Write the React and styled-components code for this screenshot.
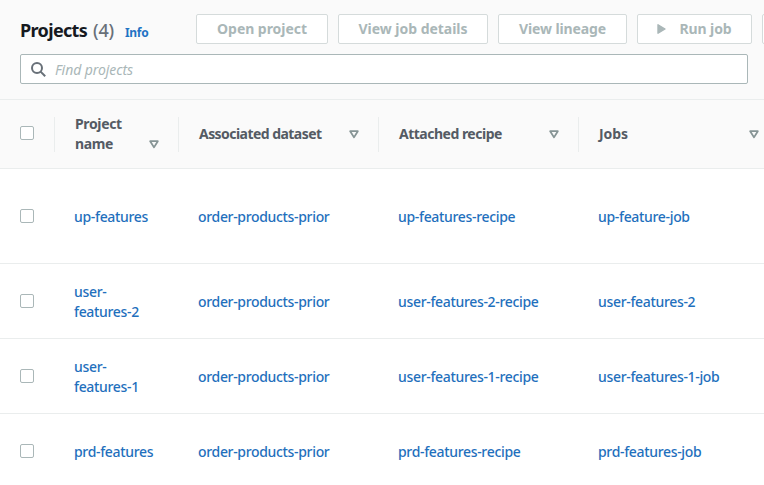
import React from "react";
import styled, { createGlobalStyle } from "styled-components";

const GlobalStyle = createGlobalStyle`
  *, *::before, *::after { box-sizing: border-box; }
  html, body { margin: 0; height: 485px; overflow: hidden; background: #fff; }
  body {
    font-family: "Noto Sans", "Open Sans", sans-serif;
    font-size: 14px;
    line-height: 20px;
    color: #16191f;
  }
`;

const Panel = styled.main`
  width: 764px;
  height: 485px;
  overflow: hidden;
  background: #fff;
`;

const Header = styled.header`
  height: 100px;
  padding: 14px 0 0 20px;
  background: #fafafa;
  border-bottom: 1px solid #eaeded;
`;

const Toolbar = styled.div`
  display: flex;
  height: 30px;
`;

const Heading = styled.div`
  flex: 0 0 176px;
  display: flex;
  align-items: baseline;
  white-space: nowrap;
`;

const Title = styled.h1`
  flex: 0 0 73px;
  margin: 0;
  font-size: 18px;
  line-height: 32px;
  font-weight: 700;
  letter-spacing: -0.65px;
`;

const Count = styled.span`
  flex: 0 0 32px;
  font-size: 18px;
  letter-spacing: -0.2px;
  font-weight: 500;
  color: #687078;
`;

const InfoLink = styled.a`
  font-size: 12px;
  font-weight: 700;
  letter-spacing: -0.3px;
  color: #1f73c4;
`;

const Actions = styled.div`
  display: flex;
  gap: 10px;
`;

const Button = styled.button`
  flex: 0 0 ${(p) => p.$width}px;
  height: 30px;
  display: flex;
  align-items: center;
  justify-content: center;
  gap: 13px;
  padding: 0;
  border: 1px solid #d5dbdb;
  border-radius: 2px;
  background: #fff;
  color: #aab7b8;
  font: 700 14px/20px "Noto Sans", sans-serif;
  letter-spacing: ${(p) => p.$spacing || 0}px;
  white-space: nowrap;
`;

const SearchBox = styled.label`
  display: flex;
  align-items: center;
  gap: 9px;
  width: 728px;
  height: 30px;
  margin-top: 10px;
  padding-left: 10px;
  border: 1px solid #aab7b8;
  border-radius: 2px;
  background: #fff;
`;

const SearchInput = styled.input`
  flex: 1;
  padding: 2px 0 0;
  border: 0;
  outline: 0;
  background: transparent;
  font: italic 14px/20px "Noto Sans", sans-serif;
  letter-spacing: -0.08px;
  &::placeholder { color: #aab7b8; opacity: 1; }
`;

const Row = styled.div`
  display: grid;
  grid-template-columns: 54px 124px 200px 200px 200px;
  align-items: center;
  width: 778px;
  height: ${(p) => p.$height}px;
  border-bottom: 1px solid #eaeded;
`;

const HeadRow = styled(Row)`
  background: #fafafa;
`;

const CheckCell = styled.div`
  padding: 0 0 ${(p) => (p.$head ? 2 : 0)}px 20px;
  display: flex;
`;

const Checkbox = styled.input.attrs({ type: "checkbox" })`
  appearance: none;
  width: 14px;
  height: 14px;
  margin: 0;
  border: 1px solid #aab7b8;
  border-radius: 2px;
  background: #fff;
`;

const HeadCell = styled.div`
  display: flex;
  align-items: ${(p) => (p.$wrap ? "flex-end" : "center")};
  justify-content: space-between;
  height: 35px;
  padding: 0 19px 0 20px;
  border-left: 1px solid #eaeded;
  color: #545b64;
  font-weight: 700;
  letter-spacing: ${(p) => p.$spacing}px;
`;

const HeadLabel = styled.span`
  width: ${(p) => (p.$wrap ? "60px" : "auto")};
  margin-bottom: ${(p) => (p.$wrap ? "-2px" : "0")};
  white-space: ${(p) => (p.$wrap ? "normal" : "nowrap")};
`;

const SortIcon = styled.svg`
  flex: none;
  width: 10px;
  height: 9px;
  margin-bottom: ${(p) => (p.$wrap ? "3px" : "0")};
`;

const Cell = styled.div`
  padding: 2px 20px 0 20px;
`;

const Link = styled.a`
  color: #1f70bd;
  font-weight: 500;
  letter-spacing: -0.33px;
`;

const columns = [
  { label: "Project name", wrap: true, spacing: -0.35 },
  { label: "Associated dataset", spacing: -0.55 },
  { label: "Attached recipe", spacing: -0.5 },
  { label: "Jobs", spacing: -0.1 },
];

const rows = [
  { height: 95, cells: ["up-features", "order-products-prior", "up-features-recipe", "up-feature-job"] },
  { height: 75, cells: ["user-features-2", "order-products-prior", "user-features-2-recipe", "user-features-2"] },
  { height: 75, cells: ["user-features-1", "order-products-prior", "user-features-1-recipe", "user-features-1-job"] },
  { height: 75, cells: ["prd-features", "order-products-prior", "prd-features-recipe", "prd-features-job"] },
];

export default function App() {
  return (
    <>
      <GlobalStyle />
      <Panel>
        <Header>
          <Toolbar>
            <Heading>
              <Title>Projects</Title>
              <Count>(4)</Count>
              <InfoLink>Info</InfoLink>
            </Heading>
            <Actions>
              <Button $width={132} $spacing={-0.05}>Open project</Button>
              <Button $width={150} $spacing={-0.03}>View job details</Button>
              <Button $width={129} $spacing={-0.1}>View lineage</Button>
              <Button $width={115} $spacing={-0.1}>
                <svg width="9" height="10" viewBox="0 0 9 10">
                  <path d="M1 .8 8 5 1 9.2Z" fill="#aab7b8" stroke="#aab7b8" strokeWidth="1.4" strokeLinejoin="round" />
                </svg>
                Run job
              </Button>
              <Button $width={132} />
            </Actions>
          </Toolbar>
          <SearchBox>
            <svg width="15" height="15" viewBox="0 0 15 15" fill="none" stroke="#687078" strokeWidth="2">
              <circle cx="6" cy="6" r="5" />
              <path d="m9.6 9.6 4.6 4.6" />
            </svg>
            <SearchInput placeholder="Find projects" />
          </SearchBox>
        </Header>
        <HeadRow $height={69}>
          <CheckCell $head><Checkbox /></CheckCell>
          {columns.map((c) => (
            <HeadCell key={c.label} $wrap={c.wrap} $spacing={c.spacing}>
              <HeadLabel $wrap={c.wrap}>{c.label}</HeadLabel>
              <SortIcon $wrap={c.wrap} viewBox="0 0 10 9">
                <path d="M1.2 1.2h7.6L5 7.4Z" fill="none" stroke="#879596" strokeWidth="1.8" strokeLinejoin="round" />
              </SortIcon>
            </HeadCell>
          ))}
        </HeadRow>
        {rows.map((r) => (
          <Row key={r.cells[0]} $height={r.height}>
            <CheckCell><Checkbox /></CheckCell>
            {r.cells.map((text, i) => (
              <Cell key={i}><Link>{text}</Link></Cell>
            ))}
          </Row>
        ))}
      </Panel>
    </>
  );
}
